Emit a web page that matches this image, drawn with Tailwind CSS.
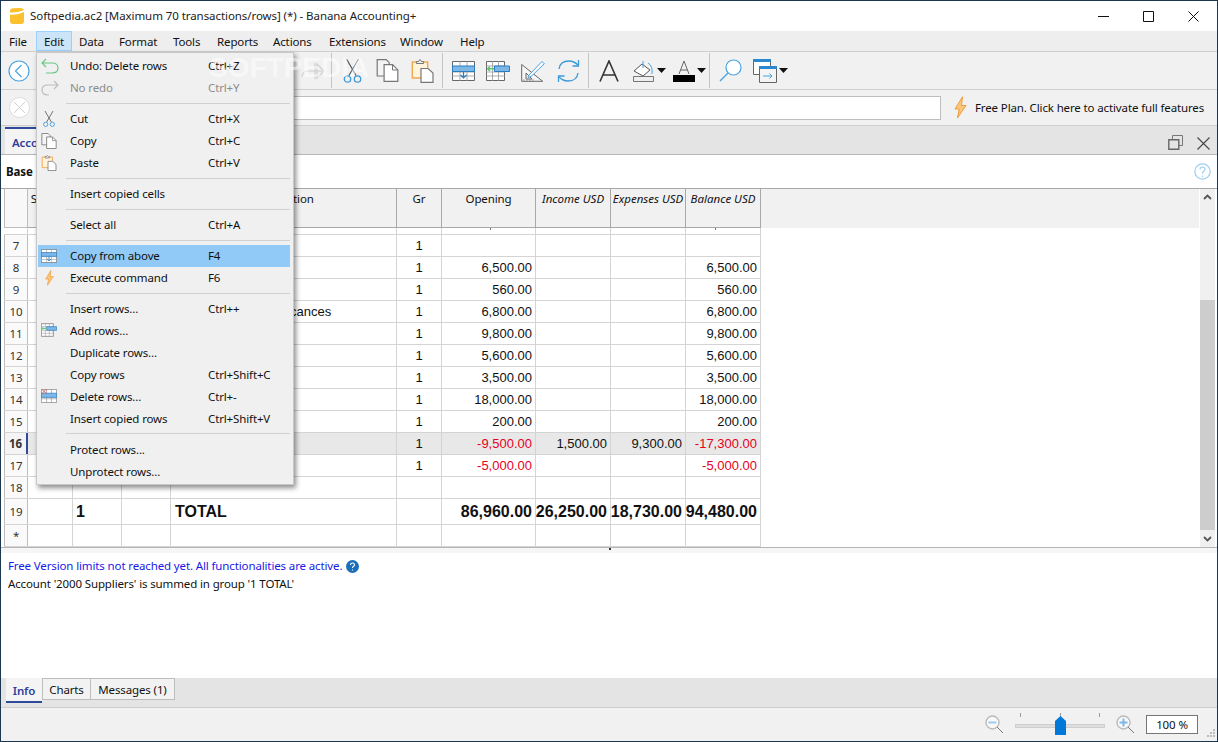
<!DOCTYPE html>
<html lang="en">
<head>
<meta charset="UTF-8">
<title>Banana Accounting+</title>
<script src="https://cdn.jsdelivr.net/npm/@tailwindcss/browser@4"></script>
</head>
<body class="bg-white overflow-hidden">
<svg class="absolute w-0 h-0">
  <defs>
    <symbol id="scissors" viewBox="0 0 18 24">
      <path d="M3 0l9.500 16.500M15 0l-9.500 16.500" fill="none" stroke="#555" stroke-width="1.200"/>
      <circle cx="4" cy="20" r="3.200" fill="none" stroke="#3c9ad8" stroke-width="1.300"/>
      <circle cx="14" cy="20" r="3.200" fill="none" stroke="#3c9ad8" stroke-width="1.300"/>
    </symbol>
    <symbol id="copy" viewBox="0 0 22 23">
      <path d="M.7 12V.7h9l3 3V17H.7z" fill="#f4f4f4" stroke="#777" stroke-width="1.200"/>
      <path d="M7.600 5.700h8.500l5.200 5.200v11.400H7.600z" fill="#fff" stroke="#777" stroke-width="1.200"/>
      <path d="M16 6v5h5" fill="none" stroke="#777"/>
    </symbol>
    <symbol id="paste" viewBox="0 0 22 24">
      <path d="M.8 3h15.400v16H.8z" fill="#fff3dc" stroke="#f0a850" stroke-width="1.400"/>
      <path d="M5 4.500V2.500h2l1.500-2 1.500 2h2v2z" fill="#eee" stroke="#777"/>
      <path d="M9.500 9.500h7l5 4.500v9.300h-12z" fill="#fff" stroke="#777" stroke-width="1.200"/>
    </symbol>
    <symbol id="grid-down" viewBox="0 0 23 20">
      <path d="M.5.500h22v19H.5z" fill="#fff" stroke="#666"/>
      <path d="M8 0v20M15 0v20M0 11h23M0 15h23" stroke="#999" stroke-width=".8"/>
      <path d="M.5 5h22v5.500H.5z" fill="#7db7e8" stroke="#2b7cc0"/>
      <path d="M11.500 11v6M8.500 14l3 3 3-3" fill="none" stroke="#2b7cc0" stroke-width="1.200"/>
    </symbol>
    <symbol id="grid-add" viewBox="0 0 24 20">
      <path d="M.5.500h18v19H.5z" fill="#fff" stroke="#666"/>
      <path d="M6.500 0v20M12.500 0v20M0 5h19M0 11h19M0 15h19" stroke="#999" stroke-width=".8"/>
      <path d="M8.500 5h15v5.500h-15z" fill="#7db7e8" stroke="#2b7cc0"/>
      <path d="M8 7.700H1.500M4 5.500L1.500 7.700 4 10" fill="none" stroke="#5cc46e" stroke-width="1.400"/>
    </symbol>
    <symbol id="bolt" viewBox="0 0 13 23">
      <path d="M8.500.8L1 13h4.200L3.500 22 12 9.500H7.500z" fill="#fbc67c" stroke="#ee9c3c" stroke-width="1"/>
    </symbol>
  </defs>
</svg>

<div class="relative w-[1218px] h-[742px] flex flex-col overflow-hidden border-x border-[#1c3850] border-t border-b font-['Noto_Sans',sans-serif] text-[11.5px] tracking-[-0.13px] text-[#111]">

  <!-- title bar -->
  <div class="h-[30px] flex items-center bg-white shrink-0">
    <svg class="ml-[9px] w-[14px] h-[16px]" viewBox="0 0 14 16"><path d="M0 3q0-2.500 3-2.800l7-.2q4 0 4 2.500V13q0 3-3 3H3q-3 0-3-3z" fill="#fbc02d"/><path d="M0 6.500q7 1 14-2.500V2q-7 3-14 2.500z" fill="#fff"/></svg>
    <span class="ml-[6px] tracking-[-0.07px] text-[#222]">Softpedia.ac2 [Maximum 70 transactions/rows] (*) - Banana Accounting+</span>
    <div class="ml-auto flex items-center">
      <svg class="w-[11px] h-[11px] mr-[34px]" viewBox="0 0 11 11"><path d="M0 5.500h11" stroke="#111"/></svg>
      <svg class="w-[11px] h-[11px] mr-[34px]" viewBox="0 0 11 11"><path d="M.5.500h10v10H.5z" fill="none" stroke="#111"/></svg>
      <svg class="w-[11px] h-[11px] mr-[18px]" viewBox="0 0 11 11"><path d="M.5.500l10 10M10.500.500l-10 10" stroke="#111"/></svg>
    </div>
  </div>

  <!-- menu bar -->
  <div class="h-[21px] shrink-0 flex items-stretch bg-[#eeeeee] border-b border-[#cfcfcf] pl-[2px]">
    <span class="w-[33px] pl-[6px] pt-[2px]">File</span>
    <span class="w-[36px] pl-[7px] pt-[1px] bg-[#cce4f7] border border-[#99d1ff]">Edit</span>
    <span class="w-[40px] pl-[7px] pt-[2px]">Data</span>
    <span class="w-[54px] pl-[7px] pt-[2px]">Format</span>
    <span class="w-[44px] pl-[7px] pt-[2px]">Tools</span>
    <span class="w-[56px] pl-[7px] pt-[2px]">Reports</span>
    <span class="w-[56px] pl-[7px] pt-[2px]">Actions</span>
    <span class="w-[71px] pl-[7px] pt-[2px]">Extensions</span>
    <span class="w-[60px] pl-[7px] pt-[2px]">Window</span>
    <span class="pl-[7px] pt-[2px]">Help</span>
  </div>

  <!-- toolbar -->
  <div class="h-[38px] shrink-0 flex items-center bg-[#f1f1f1] border-b border-[#cfcfcf] pl-[7px]">
    <svg class="w-[22px] h-[22px]" viewBox="0 0 22 22"><circle cx="11" cy="11" r="10" fill="#fff" stroke="#4aa3df" stroke-width="1.200"/><path d="M13.500 5l-6 6 6 6" fill="none" stroke="#4aa3df" stroke-width="1.200"/></svg>
    <svg class="ml-[271px] w-[25px] h-[22px]" viewBox="0 0 25 22"><path d="M1 17q0-6 7-6h15M16 4l7 7-7 7zM14 3v16" fill="none" stroke="#cfcfcf" stroke-width="1.200"/></svg>
    <div class="ml-[5px] w-px h-[35px] bg-[#c4c4c4]"></div>
    <svg class="ml-[11px] w-[19px] h-[24px]"><use href="#scissors"/></svg>
    <svg class="ml-[14px] w-[23px] h-[23px]"><use href="#copy"/></svg>
    <svg class="ml-[12px] w-[23px] h-[24px]"><use href="#paste"/></svg>
    <div class="ml-[8px] w-px h-[35px] bg-[#c4c4c4]"></div>
    <svg class="ml-[9px] w-[23px] h-[20px]"><use href="#grid-down"/></svg>
    <svg class="ml-[11px] w-[24px] h-[20px]"><use href="#grid-add"/></svg>
    <svg class="ml-[11px] w-[24px] h-[22px]" viewBox="0 0 24 22"><path d="M.7 4.500l21 16.800H.7zM5 13l6 6H5z" fill="#f6f6f6" stroke="#666"/><path d="M3 19v2M6 19v2M9 19v2M12 19v2" stroke="#888" stroke-width=".7"/><path d="M8 15L21 1.500l2.300 2.300L10 16.500l-3 1z" fill="#fff" stroke="#4aa3df"/></svg>
    <svg class="ml-[12px] w-[23px] h-[24px]" viewBox="0 0 23 24"><path d="M2 10q1-8 10-8 5 0 9 4M21 14q-1 8-10 8-5 0-9-4" fill="none" stroke="#3c9ad8" stroke-width="1.300"/><path d="M21.500 1v6h-6M1.500 23v-6h6" fill="none" stroke="#3c9ad8" stroke-width="1.300"/></svg>
    <div class="ml-[8px] w-px h-[35px] bg-[#c4c4c4]"></div>
    <svg class="ml-[10px] w-[20px] h-[22px]" viewBox="0 0 20 22"><path d="M1 21.500L10 1l9 20.500M4 15h12" fill="none" stroke="#333" stroke-width="1.600"/></svg>
    <svg class="ml-[14px] w-[22px] h-[22px]" viewBox="0 0 22 22"><path d="M1 11l8-7 8 6-7 6z" fill="#fff" stroke="#555"/><path d="M10 1v7M15 3q5 3 4 11" fill="none" stroke="#4aa3df"/><path d="M.5 16.500h20v5H.5z" fill="#eee" stroke="#777"/></svg>
    <svg class="ml-[2px] w-[9px] h-[5px]" viewBox="0 0 9 5"><path d="M0 0h9L4.500 5z" fill="#111"/></svg>
    <svg class="ml-[7px] w-[22px] h-[22px]" viewBox="0 0 22 22"><path d="M6 14L11 1l5 13M7.500 10h7" fill="none" stroke="#666"/><path d="M0 15h22v7H0z" fill="#000"/></svg>
    <svg class="ml-[2px] w-[9px] h-[5px]" viewBox="0 0 9 5"><path d="M0 0h9L4.500 5z" fill="#111"/></svg>
    <div class="ml-[3px] w-px h-[35px] bg-[#c4c4c4]"></div>
    <svg class="ml-[9px] w-[23px] h-[23px]" viewBox="0 0 23 23"><circle cx="14.500" cy="8.500" r="7.500" fill="#fff" stroke="#4aa3df" stroke-width="1.200"/><path d="M9 14L1 22" stroke="#4aa3df" stroke-width="1.200"/></svg>
    <svg class="ml-[11px] w-[24px] h-[24px]" viewBox="0 0 24 24"><path d="M.5.500h17v15H.5z" fill="#fff" stroke="#666"/><path d="M0 0h18v3H0z" fill="#2b88cf"/><path d="M6.500 7.500h17v16h-17z" fill="#f4f4f4" stroke="#666"/><path d="M6 7h18v3H6z" fill="#2b88cf"/><path d="M10 17h9M16.500 14.500L19 17l-2.500 2.500" fill="none" stroke="#4aa3df"/></svg>
    <svg class="ml-[2px] w-[9px] h-[5px]" viewBox="0 0 9 5"><path d="M0 0h9L4.500 5z" fill="#111"/></svg>
  </div>

  <!-- formula bar -->
  <div class="h-[36px] shrink-0 flex items-center bg-[#f1f1f1] border-b border-[#cfcfcf] pl-[8px]">
    <svg class="w-[21px] h-[21px]" viewBox="0 0 21 21"><circle cx="10.500" cy="10.500" r="10" fill="#fff" stroke="#dcdcdc"/><path d="M5 5l11 11M16 5L5 16" stroke="#cfcfcf"/></svg>
    <div class="ml-[7px] w-[904px] h-[24px] bg-white border border-[#bdbdbd]"></div>
    <svg class="ml-[13px] w-[13px] h-[23px]"><use href="#bolt"/></svg>
    <span class="ml-[8px] whitespace-nowrap">Free Plan. Click here to activate full features</span>
  </div>

  <!-- file tabs -->
  <div class="h-[29px] shrink-0 flex items-end bg-[#e4e4e4] border-b border-[#b5b5b5] pl-[4px]">
    <div class="w-[34px] h-[27px] bg-[#f4f4f4] border-t-2 border-[#2f4a9a] pl-[7px] pt-[5px] font-semibold text-[#2f3f9a]">Accounts</div>
    <svg class="ml-auto mb-[4px] w-[15px] h-[15px]" viewBox="0 0 15 15"><path d="M4.500.5h10v10h-10z" fill="none" stroke="#777"/><path d="M.8 4.800h10v9.500H.8z" fill="#e4e4e4" stroke="#666" stroke-width="1.400"/></svg>
    <svg class="ml-[14px] mr-[7px] mb-[4px] w-[13px] h-[13px]" viewBox="0 0 13 13"><path d="M.5.500l12 12M12.500.500l-12 12" stroke="#444" stroke-width="1.100"/></svg>
  </div>

  <!-- view bar -->
  <div class="h-[34px] shrink-0 flex items-center bg-white border-b border-[#a8a8a8] pl-[5px]">
    <span class="font-bold">Base</span>
    <svg class="ml-auto mr-[6px] w-[17px] h-[17px]" viewBox="0 0 17 17"><circle cx="8.500" cy="8.500" r="7.700" fill="#fff" stroke="#9ccdf0" stroke-width="1.200"/><path d="M6 6.500q0-2.500 2.500-2.500t2.500 2.200q0 1.300-1.500 2.300-1 .7-1 2.200M8.500 12.500v1.500" fill="none" stroke="#9ccdf0" stroke-width="1.100"/></svg>
  </div>

  <!-- table area -->
  <div class="h-[359px] shrink-0 flex border-b border-[#b5b5b5]">
    <div class="flex-1 flex flex-col min-w-0 pl-[3px]">
      <div id="head" class="h-[39px] shrink-0 bg-[#f1f1f1] flex"></div>
      <div id="rows" class="flex flex-col w-[757px]"></div>
    </div>
    <div class="w-[15px] mr-[2px] ml-[1px] flex flex-col bg-[#f0f0f0]">
      <svg class="w-[15px] h-[17px]" viewBox="0 0 15 17"><path d="M4 10l3.500-3.500L11 10" fill="none" stroke="#555" stroke-width="1.800"/></svg>
      <div class="mt-[94px] h-[230px] bg-[#cdcdcd]"></div>
      <svg class="mt-auto w-[15px] h-[17px]" viewBox="0 0 15 17"><path d="M4 7l3.500 3.500L11 7" fill="none" stroke="#555" stroke-width="1.800"/></svg>
    </div>
  </div>

  <!-- info pane -->
  <div class="flex-1 flex flex-col bg-white">
    <div class="h-[5px] bg-[#f6f6f6] flex justify-center"><span class="ml-[2px] w-[2px] h-[2px] bg-[#333]"></span></div>
    <div class="pl-[7px] pt-[4px] leading-[18px]">
      <div class="flex items-center text-[#1a1ae6]">Free Version limits not reached yet. All functionalities are active.
        <svg class="ml-[4px] w-[13px] h-[13px]" viewBox="0 0 13 13"><circle cx="6.500" cy="6.500" r="6.500" fill="#1b6fb8"/><path d="M4.500 5q0-2 2-2t2 1.700q0 1-1 1.600-1 .6-1 1.700M6.500 9.500v1" fill="none" stroke="#fff" stroke-width="1.100"/></svg>
      </div>
      <div>Account '2000 Suppliers' is summed in group '1 TOTAL'</div>
    </div>
  </div>

  <!-- bottom tabs -->
  <div class="h-[30px] shrink-0 flex items-start bg-[#e4e4e4] border-b border-[#cfcfcf] pl-[5px]">
    <div class="w-[36px] h-[25px] bg-[#f4f4f4] border-b-2 border-[#2f4a9a] text-center pt-[4px] font-semibold text-[#2f3f9a]">Info</div>
    <div class="h-[22px] w-[49px] bg-[#f2f2f2] border border-[#bdbdbd] text-center pt-[2px]">Charts</div>
    <div class="h-[22px] w-[84px] bg-[#f2f2f2] border border-l-0 border-[#bdbdbd] text-center pt-[2px]">Messages (1)</div>
  </div>

  <!-- status bar -->
  <div class="h-[33px] shrink-0 flex items-center bg-[#f1f1f1] pl-[984px]">
    <svg class="w-[19px] h-[19px]" viewBox="0 0 19 19"><circle cx="7.500" cy="7.500" r="6.500" fill="#f8f8f8" stroke="#bbb" stroke-width="1.400"/><path d="M3.500 7.500h8" stroke="#9ccdf0" stroke-width="2"/><path d="M12 12l6 6" stroke="#777"/></svg>
    <div class="ml-[11px] w-[90px] h-[25px] flex flex-col relative">
      <div class="flex justify-between px-[5px] mt-[1px]"><span class="w-px h-[4px] bg-[#999]"></span><span class="w-px h-[4px] bg-[#999]"></span><span class="w-px h-[4px] bg-[#999]"></span></div>
      <div class="mt-[7px] h-[4px] bg-[#dedede] border border-[#cfcfcf]"></div>
      <svg class="absolute left-[40px] top-[4px] w-[11px] h-[19px]" viewBox="0 0 11 19"><path d="M5.500 0L11 5v14H0V5z" fill="#0078d7"/></svg>
    </div>
    <svg class="ml-[11px] w-[19px] h-[19px]" viewBox="0 0 19 19"><circle cx="7.500" cy="7.500" r="6.500" fill="#f8f8f8" stroke="#bbb" stroke-width="1.400"/><path d="M3.500 7.500h8M7.500 3.500v8" stroke="#7db7e8" stroke-width="2"/><path d="M12 12l6 6" stroke="#777"/></svg>
    <div class="ml-[11px] w-[52px] h-[19px] bg-white border border-[#777] text-center leading-[17px]">100 %</div>
    <svg class="ml-[9px] mt-[16px] w-[8px] h-[8px]" viewBox="0 0 8 8"><path d="M6 0h2v2H6zM3 3h2v2H3zM6 3h2v2H6zM0 6h2v2H0zM3 6h2v2H3zM6 6h2v2H6z" fill="#bbb"/></svg>
  </div>

  <!-- edit menu -->
  <div class="absolute left-[35px] top-[51px] w-[258px] h-[433px] bg-[#f0f0f0] border border-[#c8c8c8] shadow-[2px_3px_5px_rgba(0,0,0,0.45)] pl-[1px] pr-[3px] py-[2px] flex flex-col">
    <div class="flex items-center h-[22px] pl-[32px]">
      <svg class="absolute left-[4px] w-[18px] h-[16px]" viewBox="0 0 18 16"><path d="M1 5h10q6 0 6 5t-6 5H5M5 1L1 5l4 4" fill="none" stroke="#6cc884" stroke-width="1.200"/></svg>
      <span class="w-[138px]">Undo: Delete rows</span><span>Ctrl+Z</span></div>
    <div class="flex items-center h-[22px] pl-[32px] text-[#8c8c8c]">
      <svg class="absolute left-[4px] w-[18px] h-[16px]" viewBox="0 0 18 16"><path d="M17 5H7q-6 0-6 5t6 5h1M13 1l4 4-4 4" fill="none" stroke="#bdbdbd" stroke-width="1.200"/></svg>
      <span class="w-[138px]">No redo</span><span>Ctrl+Y</span></div>
    <div class="h-[9px] ml-[28px] flex items-center"><div class="w-full h-px bg-[#d0d0d0]"></div></div>
    <div class="flex items-center h-[22px] pl-[32px]">
      <svg class="absolute left-[6px] w-[12px] h-[16px]"><use href="#scissors"/></svg>
      <span class="w-[138px]">Cut</span><span>Ctrl+X</span></div>
    <div class="flex items-center h-[22px] pl-[32px]">
      <svg class="absolute left-[4px] w-[16px] h-[16px]"><use href="#copy"/></svg>
      <span class="w-[138px]">Copy</span><span>Ctrl+C</span></div>
    <div class="flex items-center h-[22px] pl-[32px]">
      <svg class="absolute left-[4px] w-[16px] h-[16px]"><use href="#paste"/></svg>
      <span class="w-[138px]">Paste</span><span>Ctrl+V</span></div>
    <div class="h-[9px] ml-[28px] flex items-center"><div class="w-full h-px bg-[#d0d0d0]"></div></div>
    <div class="flex items-center h-[22px] pl-[32px]"><span class="w-[138px]">Insert copied cells</span></div>
    <div class="h-[9px] ml-[28px] flex items-center"><div class="w-full h-px bg-[#d0d0d0]"></div></div>
    <div class="flex items-center h-[22px] pl-[32px]"><span class="w-[138px]">Select all</span><span>Ctrl+A</span></div>
    <div class="h-[9px] ml-[28px] flex items-center"><div class="w-full h-px bg-[#d0d0d0]"></div></div>
    <div class="flex items-center h-[22px] pl-[32px] bg-[#91c9f7]">
      <svg class="absolute left-[4px] w-[16px] h-[14px]"><use href="#grid-down"/></svg>
      <span class="w-[138px]">Copy from above</span><span>F4</span></div>
    <div class="flex items-center h-[22px] pl-[32px]">
      <svg class="absolute left-[8px] w-[9px] h-[16px]"><use href="#bolt"/></svg>
      <span class="w-[138px]">Execute command</span><span>F6</span></div>
    <div class="h-[9px] ml-[28px] flex items-center"><div class="w-full h-px bg-[#d0d0d0]"></div></div>
    <div class="flex items-center h-[22px] pl-[32px]"><span class="w-[138px]">Insert rows...</span><span>Ctrl++</span></div>
    <div class="flex items-center h-[22px] pl-[32px]">
      <svg class="absolute left-[4px] w-[16px] h-[14px]"><use href="#grid-add"/></svg>
      <span class="w-[138px]">Add rows...</span></div>
    <div class="flex items-center h-[22px] pl-[32px]"><span class="w-[138px]">Duplicate rows...</span></div>
    <div class="flex items-center h-[22px] pl-[32px]"><span class="w-[138px]">Copy rows</span><span>Ctrl+Shift+C</span></div>
    <div class="flex items-center h-[22px] pl-[32px]">
      <svg class="absolute left-[4px] w-[16px] h-[14px]" viewBox="0 0 23 20"><path d="M.5.500h22v19H.5z" fill="#fff" stroke="#777"/><path d="M8 0v20M15 0v20M0 14h23" stroke="#999"/><path d="M.5 6h22v6H.5z" fill="#7db7e8" stroke="#2b7cc0"/><path d="M1 0l7 7M8 0L1 7" stroke="#e05050" stroke-width="1.300"/></svg>
      <span class="w-[138px]">Delete rows...</span><span>Ctrl+-</span></div>
    <div class="flex items-center h-[22px] pl-[32px]"><span class="w-[138px]">Insert copied rows</span><span>Ctrl+Shift+V</span></div>
    <div class="h-[9px] ml-[28px] flex items-center"><div class="w-full h-px bg-[#d0d0d0]"></div></div>
    <div class="flex items-center h-[22px] pl-[32px]"><span class="w-[138px]">Protect rows...</span></div>
    <div class="flex items-center h-[22px] pl-[32px]"><span class="w-[138px]">Unprotect rows...</span></div>
  </div>

  <!-- watermark -->
  <div class="absolute left-[208px] top-[46px] font-['Liberation_Sans'] text-[28px] font-bold tracking-normal text-white/50 pointer-events-none">SOFTPEDIA</div>
</div>

<script>
// column widths of the grid, left to right
const widths = ['w-[24px]','w-[45px]','w-[49px]','w-[49px]','w-[226px]','w-[45px]','w-[94px]','w-[75px]','w-[75px]','w-[75px]'];
const headers = ['', 'Section', '', '', 'Description', 'Gr', 'Opening', 'Income USD', 'Expenses USD', 'Balance USD'];

// num, group, description, gr, opening, income, expenses, balance
const data = [
  ['7','','','1','','','',''],
  ['8','','','1','6,500.00','','','6,500.00'],
  ['9','','','1','560.00','','','560.00'],
  ['10','','Vacances','1','6,800.00','','','6,800.00'],
  ['11','','','1','9,800.00','','','9,800.00'],
  ['12','','','1','5,600.00','','','5,600.00'],
  ['13','','','1','3,500.00','','','3,500.00'],
  ['14','','','1','18,000.00','','','18,000.00'],
  ['15','','','1','200.00','','','200.00'],
  ['16','','','1','-9,500.00','1,500.00','9,300.00','-17,300.00'],
  ['17','','','1','-5,000.00','','','-5,000.00'],
  ['18','','','','','','',''],
  ['19','1','TOTAL','','86,960.00','26,250.00','18,730.00','94,480.00'],
  ['*','','','','','','','']
];

const head = document.getElementById('head');
headers.forEach((h, i) => {
  const c = document.createElement('div');
  const italic = i > 6 ? 'italic tracking-normal' : '';
  const corner = i === 0 ? 'bg-[#f8f8f8] border-l border-[#bdbdbd]' : '';
  c.className = `${widths[i]} shrink-0 h-full border-r border-b border-[#a8a8a8] pt-[1px] text-center whitespace-nowrap overflow-hidden ${italic} ${corner}`;
  c.textContent = h;
  head.appendChild(c);
});

const rows = document.getElementById('rows');

// row 6 is scrolled away: only its lower 6px with the comma tails show
const cut = document.createElement('div');
cut.className = 'flex h-[7px] border-b border-[#d4d4d4]';
widths.forEach((w, i) => {
  const c = document.createElement('div');
  c.className = `${w} shrink-0 border-r border-[#d4d4d4] flex justify-end`;
  if (i === 6) c.innerHTML = '<span class="mr-[44px] w-px h-[2px] bg-[#777]"></span>';
  if (i === 9) c.innerHTML = '<span class="mr-[44px] w-px h-[2px] bg-[#777]"></span>';
  cut.appendChild(c);
});
rows.appendChild(cut);

data.forEach(r => {
  const [num, grp, desc, gr, open, inc, exp, bal] = r;
  const total = num === '19';
  const sel = num === '16';
  const row = document.createElement('div');
  row.className = `flex border-b border-[#d4d4d4] ${total ? 'h-[26px]' : 'h-[22px]'} ${sel ? 'bg-[#e8e8e8]' : ''}`;
  const cells = [num, '', grp, '', desc, gr, open, inc, exp, bal];
  cells.forEach((t, i) => {
    const c = document.createElement('div');
    let cls = `${widths[i]} shrink-0 border-r border-[#d4d4d4] flex items-center whitespace-nowrap overflow-hidden`;
    if (i === 0) {
      cls = `${widths[i]} shrink-0 flex items-center justify-center border-l border-r border-[#bdbdbd] text-[#333] ` + (sel ? 'font-bold border-r-2 border-r-[#2f4a9a] bg-[#f4f4f4]' : 'bg-[#fafafa]');
    } else if (i >= 6) {
      const red = t.startsWith('-') ? 'text-[#e8001c]' : '';
      const size = total ? "font-['Liberation_Sans'] text-[16px] font-bold tracking-normal" : "font-['Liberation_Sans'] text-[13px] tracking-normal";
      cls += ` justify-end pr-[3px] ${size} ${red}`;
    } else if (i === 5) {
      cls += " justify-center font-['Liberation_Sans'] text-[13px] tracking-normal";
    } else if (i === 4 && total) {
      cls += " pl-[4px] font-['Liberation_Sans'] text-[16px] font-bold tracking-normal";
    } else if (i === 4) {
      cls += " pl-[104px] font-['Liberation_Sans'] text-[13px] tracking-normal";
    } else if (i === 2) {
      cls += " pl-[3px] font-['Liberation_Sans'] text-[16px] font-bold tracking-normal";
    }
    c.className = cls;
    c.textContent = t;
    row.appendChild(c);
  });
  rows.appendChild(row);
});
</script>
</body>
</html>
